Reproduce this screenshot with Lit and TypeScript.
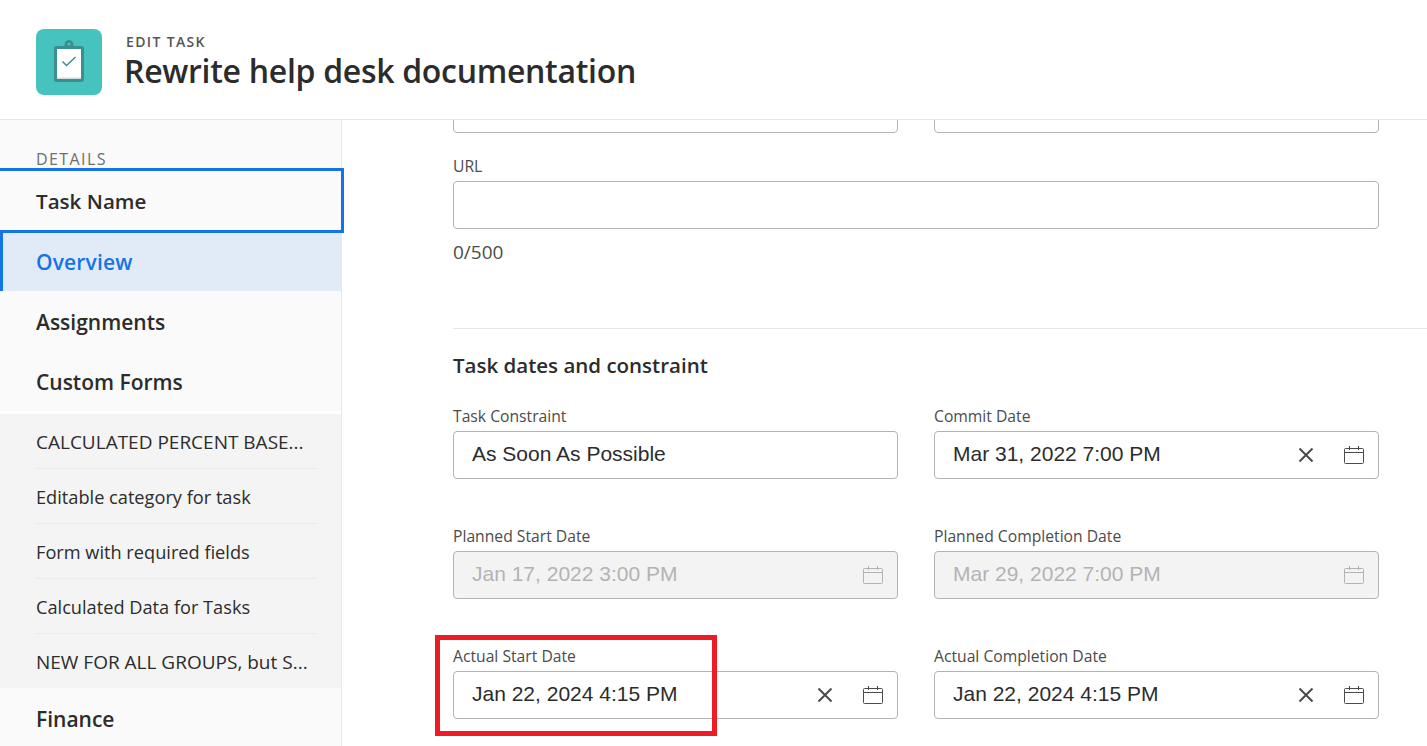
import { LitElement, css, html, svg } from 'lit'
import { customElement } from 'lit/decorators.js'

const calendar = svg`<svg class="cal" width="20" height="18" viewBox="0 0 20 18" fill="none" stroke="currentColor" stroke-width="1">
	<rect x="0.5" y="2.5" width="19" height="15" rx="1"/>
	<path d="M0.5 6.5H19.5M5.5 0V4M14.5 0V4"/>
</svg>`

const cross = svg`<svg class="x" width="16" height="16" viewBox="0 0 16 16" fill="none" stroke="currentColor" stroke-width="2">
	<path d="M1.5 1.5L14.5 14.5M14.5 1.5L1.5 14.5"/>
</svg>`

@customElement('app-root')
export class AppRoot extends LitElement {
	private dateField(label: string, value: string, disabled = false) {
		return html`
		<div class="field">
			<label>${label}</label>
			<div class="input ${disabled ? 'disabled' : ''}">
				<span class="value">${value}</span>
				${disabled ? '' : html`<span class="clear">${cross}</span>`}
				${calendar}
			</div>
		</div>`
	}

	render() {
		return html`
		<header>
			<div class="logo">
				<svg width="30" height="42" viewBox="0 0 30 42">
					<path d="M2.500 6H10.300C10.500 2 12.500 0 15 0S19.500 2 19.700 6H27.500C28.900 6 30 7.100 30 8.500V39.500C30 40.900 28.900 42 27.500 42H2.500C1.100 42 0 40.900 0 39.500V8.500C0 7.100 1.100 6 2.500 6Z" fill="#3a8f90"/>
					<rect x="3" y="9" width="24" height="30" fill="#fff"/>
					<rect x="3" y="37.500" width="24" height="1.500" fill="#d5dedd"/>
					<circle cx="15" cy="4" r="1.600" fill="#46c2bf"/>
					<path d="M8.500 21.500L12.500 25.500L21.500 17" fill="none" stroke="#3a9293" stroke-width="1.500"/>
				</svg>
			</div>
			<div class="titles">
				<div class="eyebrow">EDIT TASK</div>
				<h1>Rewrite help desk documentation</h1>
			</div>
		</header>
		<div class="body">
			<nav>
				<div class="section">DETAILS</div>
				<div class="item focused">Task Name</div>
				<div class="item active">Overview</div>
				<div class="item">Assignments</div>
				<div class="item">Custom Forms</div>
				<div class="forms">
					<div class="form caps"><span>CALCULATED PERCENT BASE...</span></div>
					<div class="form"><span>Editable category for task</span></div>
					<div class="form"><span>Form with required fields</span></div>
					<div class="form"><span>Calculated Data for Tasks</span></div>
					<div class="form caps"><span>NEW FOR ALL GROUPS, but S...</span></div>
				</div>
				<div class="item">Finance</div>
			</nav>
			<main>
				<div class="grid clipped">
					<div class="input"></div>
					<div class="input"></div>
				</div>
				<div class="field url">
					<label>URL</label>
					<div class="input"></div>
				</div>
				<div class="count">0/500</div>
				<div class="divider"></div>
				<h2>Task dates and constraint</h2>
				<div class="grid">
					<div class="field">
						<label>Task Constraint</label>
						<div class="input"><span class="value">As Soon As Possible</span></div>
					</div>
					${this.dateField('Commit Date', 'Mar 31, 2022 7:00 PM')}
					${this.dateField('Planned Start Date', 'Jan 17, 2022 3:00 PM', true)}
					${this.dateField('Planned Completion Date', 'Mar 29, 2022 7:00 PM', true)}
					${this.dateField('Actual Start Date', 'Jan 22, 2024 4:15 PM')}
					${this.dateField('Actual Completion Date', 'Jan 22, 2024 4:15 PM')}
				</div>
			</main>
		</div>
		<div class="callout"></div>
	`
	}

	static styles = css`
	:host {
		display: block;
		position: relative;
		width: 1427px;
		height: 746px;
		overflow: hidden;
		background: #fff;
		color: #2c2c2c;
		font-family: "Open Sans", "Noto Sans", sans-serif;
	}

	header {
		height: 119px;
		box-sizing: content-box;
		border-bottom: 1px solid #e8e8e8;
		display: flex;
		align-items: flex-start;
		padding-left: 36px;
		gap: 22px;
	}

	.logo {
		width: 66px;
		height: 66px;
		box-sizing: border-box;
		padding-bottom: 2px;
		margin-top: 29px;
		border-radius: 8px;
		background: #46c2bf;
		display: flex;
		align-items: center;
		justify-content: center;
	}

	.titles {
		padding-top: 34px;
	}

	.eyebrow {
		font-size: 14px;
		line-height: 16px;
		letter-spacing: 1.35px;
		font-weight: 600;
		color: #555;
		padding-left: 2px;
	}

	h1 {
		margin: 0;
		font-size: 32px;
		line-height: 42px;
		font-weight: 600;
		color: #2c2c2c;
		letter-spacing: -0.3px;
	}

	.body {
		display: flex;
		height: 626px;
	}

	nav {
		width: 341px;
		flex: none;
		box-sizing: content-box;
		background: #fafafa;
		border-right: 1px solid #e8e8e8;
		position: relative;
	}

	.section {
		height: 48px;
		box-sizing: border-box;
		padding: 30px 0 0 36px;
		font-size: 16px;
		line-height: 18px;
		letter-spacing: 1.4px;
		color: #6e6e6e;
	}

	.item {
		height: 60px;
		padding-left: 36px;
		padding-top: 2px;
		display: flex;
		align-items: center;
		font-size: 21px;
		font-weight: 600;
		color: #2c2c2c;
		box-sizing: border-box;
	}

	.focused {
		height: 65px;
		margin-right: -3px;
		border: 3px solid #1473e6;
		border-left: none;
		padding-top: 1px;
		font-size: 20.600px;
		position: relative;
	}

	.active {
		height: 58px;
		background: #e1ebf7;
		color: #1473e6;
		border-left: 3px solid #1473e6;
		padding-left: 33px;
		padding-top: 0;
		letter-spacing: 0.15px;
	}

	.forms {
		border-top: 3px solid #fff;
		background: #f4f4f4;
	}

	.form {
		height: 55px;
		margin-left: 36px;
		margin-right: 24px;
		border-bottom: 1px solid #ebebeb;
		box-sizing: border-box;
		display: flex;
		align-items: center;
		padding-top: 2px;
		font-size: 18.200px;
		color: #2c2c2c;
		white-space: nowrap;
	}

	.caps {
		font-size: 19px;
		padding-top: 1px;
	}

	.form:last-child {
		border-bottom: none;
		height: 54px;
	}

	main {
		flex: 1;
		min-width: 0;
		padding-left: 111px;
		overflow: hidden;
	}

	.grid {
		display: grid;
		grid-template-columns: 445px 445px;
		column-gap: 36px;
		row-gap: 47px;
	}

	.clipped {
		margin-top: -35px;
	}

	.field label {
		display: block;
		font-size: 15.700px;
		line-height: 20px;
		height: 25px;
		color: #4b4b4b;
	}

	.url {
		width: 926px;
		margin-top: 23px;
	}

	.input {
		height: 48px;
		box-sizing: border-box;
		border: 1px solid #b3b3b3;
		border-radius: 4px;
		background: #fff;
		display: flex;
		align-items: center;
		padding: 0 14px 0 18px;
		color: #4b4b4b;
	}

	.disabled {
		background: #f3f3f3;
		color: #b3b3b3;
	}

	.value {
		flex: 1;
		font-family: "Liberation Sans", Arial, sans-serif;
		font-size: 21px;
		color: #2c2c2c;
		padding-bottom: 2px;
	}

	.disabled .value {
		color: #b3b3b3;
	}

	.clear {
		display: flex;
		margin-right: 30px;
	}

	.cal {
		flex: none;
	}

	.count {
		margin-top: 11px;
		font-size: 19px;
		line-height: 24px;
		color: #4b4b4b;
	}

	.divider {
		height: 1px;
		background: #e8e8e8;
		margin-top: 64px;
	}

	h2 {
		margin: 22px 0 27px;
		font-size: 20.500px;
		line-height: 28px;
		font-weight: 600;
		color: #2c2c2c;
	}

	.callout {
		position: absolute;
		left: 435px;
		top: 635px;
		width: 282px;
		height: 101px;
		box-sizing: border-box;
		border: 5px solid #ed1c24;
	}
	`
}

declare global {
	interface HTMLElementTagNameMap {
		'app-root': AppRoot
	}
}
